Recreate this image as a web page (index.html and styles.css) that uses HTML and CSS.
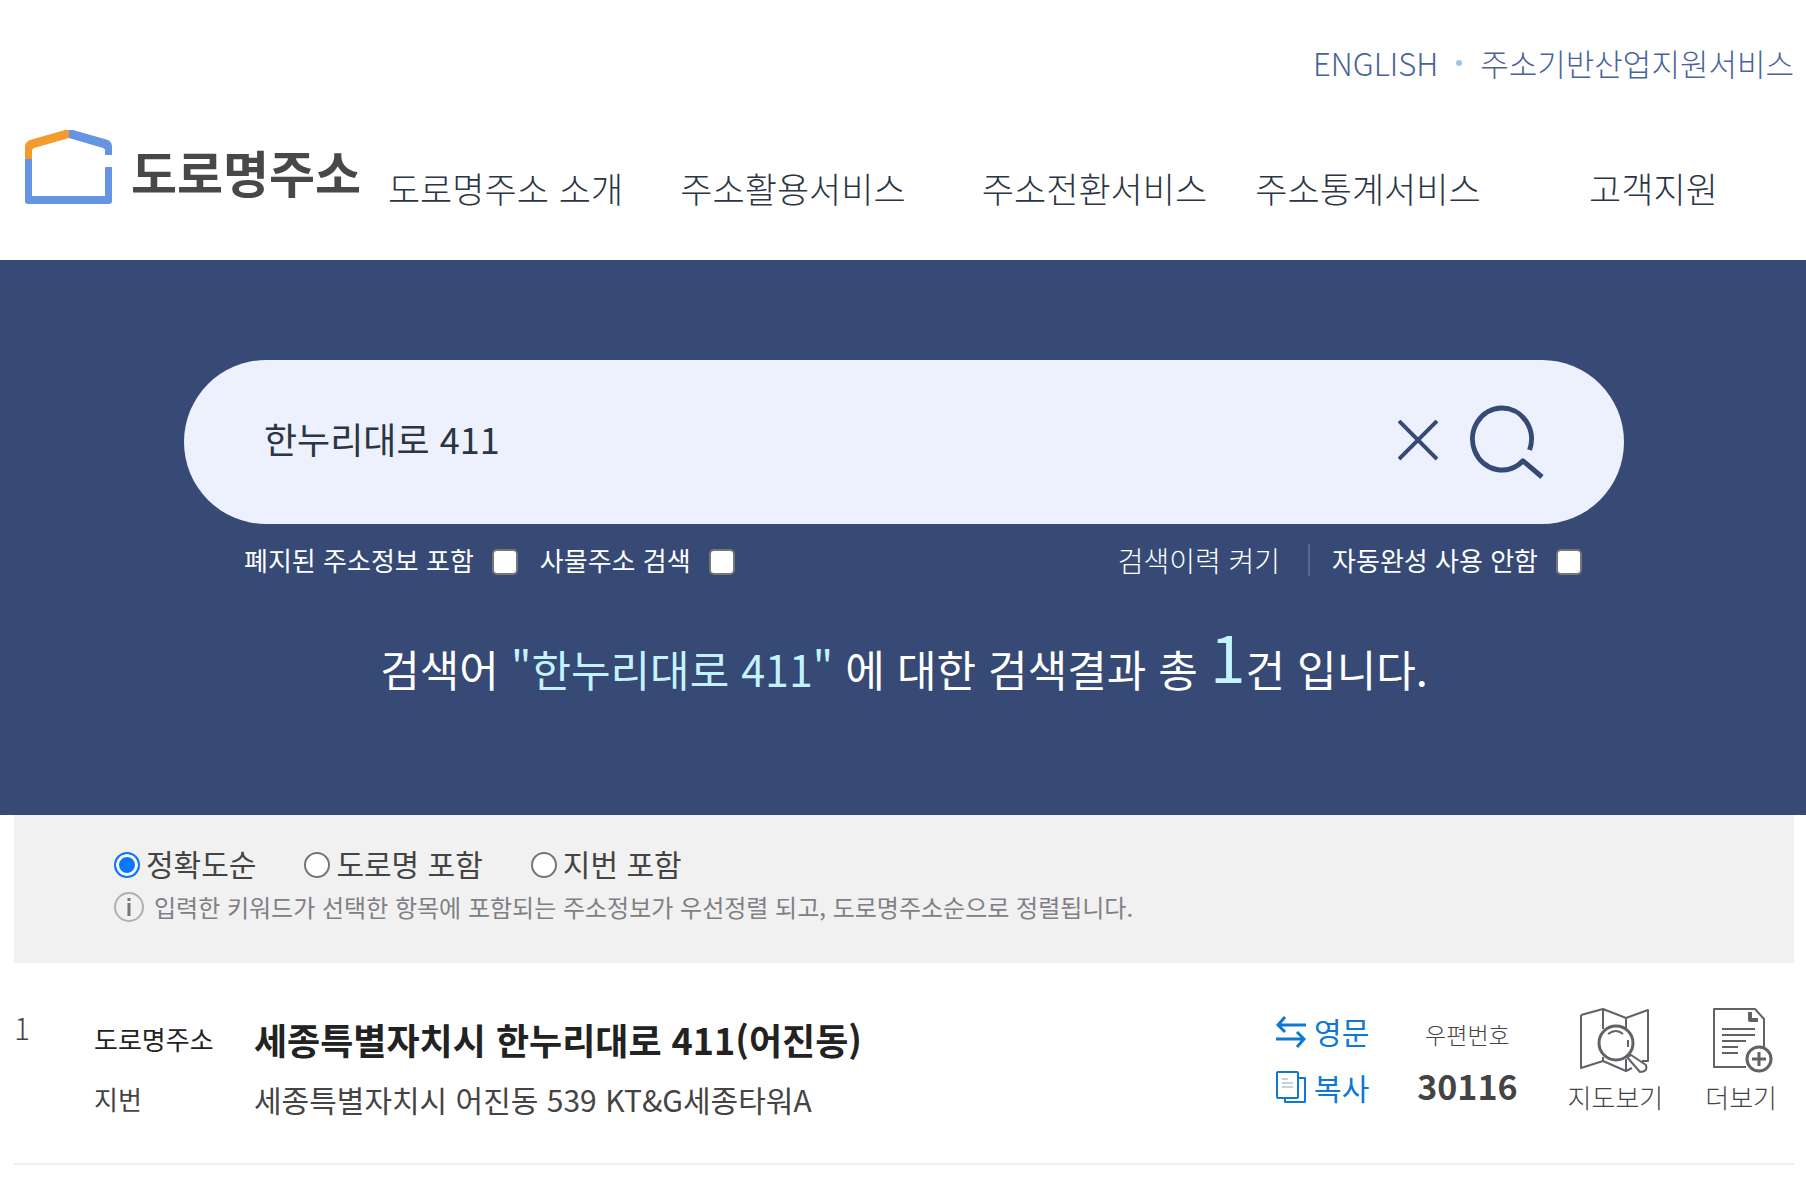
FILE: index.html
```html
<!DOCTYPE html>
<html lang="ko">
<head>
    <meta charset="utf-8">
    <title>도로명주소</title>
    <link rel="stylesheet" href="styles.css">
</head>
<body>

    <header class="header">
        <div class="util">
            <a href="#">ENGLISH</a>
            <span class="dot"></span>
            <a href="#">주소기반산업지원서비스</a>
        </div>
        <div class="header-main">
            <a href="#" class="logo">
                <svg width="88" height="74" viewBox="0 0 88 74">
                    <path d="M0 29V17Q0 12 5 10L40 0H44V8L9 18Q7 19 7 21V29Z" fill="#f39c2d"/>
                    <path d="M44 0H48L83 10Q87 12 87 17V25H80V20Q80 19 78 18L44 8Z" fill="#6594e2"/>
                    <path d="M0 29H7V66H80V38Q80 37 81 37H87V71Q87 74 84 74H3Q0 74 0 71Z" fill="#6594e2"/>
                </svg>
                <span>도로명주소</span>
            </a>
            <nav class="nav">
                <a href="#">도로명주소 소개</a>
                <a href="#">주소활용서비스</a>
                <a href="#">주소전환서비스</a>
                <a href="#">주소통계서비스</a>
                <a href="#">고객지원</a>
            </nav>
        </div>
    </header>

    <section class="hero">
        <form class="search">
            <input type="text" class="search-input" value="한누리대로 411" aria-label="주소 검색">
            <button type="button" class="icon-btn" aria-label="지우기">
                <svg width="40" height="44" viewBox="0 0 40 44" fill="none" stroke="#364a75" stroke-width="4">
                    <path d="M1 1L39 39M39 1L1 39"/>
                </svg>
            </button>
            <button type="button" class="icon-btn" aria-label="검색">
                <svg width="74" height="74" viewBox="0 0 74 74" fill="none" stroke="#364a75" stroke-width="5">
                    <path d="M59.6 45A29.5 31 0 1 0 53 55.8L72 72" stroke-linejoin="round"/>
                </svg>
            </button>
        </form>
        <div class="options">
            <label class="check">폐지된 주소정보 포함 <input type="checkbox"></label>
            <label class="check">사물주소 검색 <input type="checkbox"></label>
            <button type="button" class="history-btn">검색이력 켜기</button>
            <label class="check">자동완성 사용 안함 <input type="checkbox"></label>
        </div>
        <p class="summary">검색어 <em>"한누리대로 411"</em> 에 대한 검색결과 총 <em class="count">1</em>건 입니다.</p>
    </section>

    <main class="content">
        <div class="sort">
            <div class="radios">
                <label><input type="radio" name="sort" checked>정확도순</label>
                <label><input type="radio" name="sort">도로명 포함</label>
                <label><input type="radio" name="sort">지번 포함</label>
            </div>
            <p class="info">
                <svg width="30" height="30" viewBox="0 0 30 30" fill="none">
                    <circle cx="15" cy="15" r="14" stroke="#b0b0b4" stroke-width="2"/>
                    <path d="M15 11V24M15 6V9" stroke="#77777a" stroke-width="3"/>
                </svg>
                입력한 키워드가 선택한 항목에 포함되는 주소정보가 우선정렬 되고, 도로명주소순으로 정렬됩니다.
            </p>
        </div>

        <div class="result">
            <span class="num">1</span>
            <dl class="address">
                <dt class="road">도로명주소</dt>
                <dd class="road-addr">세종특별자치시 한누리대로 411(어진동)</dd>
                <dt>지번</dt>
                <dd>세종특별자치시 어진동 539 KT&amp;G세종타워A</dd>
            </dl>
            <div class="links">
                <button type="button">
                    <svg width="30" height="34" viewBox="0 0 30 34" fill="none" stroke="#0f78d0" stroke-width="3">
                        <path d="M30 11H2M9 3L2 11L9 18"/>
                        <path d="M0 25H28M21 18L28 25L21 33"/>
                    </svg>
                    영문
                </button>
                <button type="button">
                    <svg width="30" height="32" viewBox="0 0 30 32" fill="none" stroke="#0f78d0" stroke-width="2" stroke-linejoin="round">
                        <path d="M22 7H29V31H9V27"/>
                        <rect x="1" y="1" width="21" height="26" rx="1"/>
                        <path d="M6 8H12M6 12H17M6 16H17" stroke="#8aa0c0" stroke-width="1"/>
                    </svg>
                    복사
                </button>
            </div>
            <div class="zip">
                <span>우편번호</span>
                <strong>30116</strong>
            </div>
            <button type="button" class="tool map">
                <svg width="70" height="66" viewBox="0 0 70 66" fill="none" stroke="#606266" stroke-width="2" stroke-linejoin="round">
                    <path d="M1 8L23 2L46 11L68 3V54H62M23 2V22M23 50V54L1 61V8M23 54L46 64L52 61M46 11V21M46 52V64"/>
                    <circle cx="36" cy="36" r="17" stroke-width="3"/>
                    <path d="M28 27Q36 21 43 27M48 33V40"/>
                    <path d="M47 50L51 48L66 58Q68 65 60 65Z"/>
                </svg>
                지도보기
            </button>
            <button type="button" class="tool">
                <svg width="68" height="66" viewBox="-5 0 68 66" fill="none" stroke="#606266" stroke-width="2" stroke-linejoin="round">
                    <path d="M34 60H2V2H43L52 12V40"/>
                    <path d="M38 5V13H46" stroke-width="4"/>
                    <path d="M10 22H43M10 28H43M10 34H34M10 40H26M10 46H26"/>
                    <circle cx="47" cy="52" r="12" stroke-width="3"/>
                    <path d="M40 52H54M47 45V59" stroke-width="3"/>
                </svg>
                더보기
            </button>
        </div>
    </main>

</body>
</html>
```
FILE: styles.css
```css
* {
    box-sizing: border-box;
}

body {
    margin: 0;
    font-family: "Noto Sans CJK KR", "Noto Sans", sans-serif;
    font-weight: 400;
    color: #444;
    background-color: #fff;
}

a {
    color: inherit;
    text-decoration: none;
}

button {
    padding: 0;
    border: none;
    background: none;
    font: inherit;
    color: inherit;
    cursor: pointer;
}

svg {
    display: block;
    flex-shrink: 0;
}

/* Header */
.header {
    font-weight: 300;
}

.util {
    display: flex;
    justify-content: flex-end;
    align-items: center;
    gap: 18px;
    padding: 43px 12px 0 0;
    font-size: 31px;
    line-height: 40px;
    color: #48639b;
}

.dot {
    width: 6px;
    height: 6px;
    border-radius: 50%;
    background-color: #9cc3e8;
}

.header-main {
    display: flex;
    align-items: flex-start;
    padding: 47px 0 50px 25px;
}

.logo {
    display: flex;
    align-items: center;
    gap: 18px;
    height: 74px;
    width: 354px;
    flex-shrink: 0;
    font-size: 50px;
    line-height: 74px;
    font-weight: 700;
    color: #484848;
    white-space: nowrap;
}

.logo span {
    padding-top: 8px;
}

.nav {
    flex: 1;
    display: grid;
    grid-template-columns: 253fr 322fr 281fr 266fr 305fr;
    margin-top: 36px;
    font-size: 35px;
    line-height: 44px;
    color: #2b3544;
    text-align: center;
    white-space: nowrap;
}

/* Search area */
.hero {
    padding: 100px 182px 107px 184px;
    background-color: #364a75;
    color: #fff;
}

.search {
    display: flex;
    align-items: center;
    gap: 32px;
    padding: 45px 80px;
    border-radius: 82px;
    background-color: #edf1fd;
}

.search-input {
    flex: 1;
    min-width: 0;
    padding: 0 0 8px;
    border: none;
    outline: none;
    background: none;
    font: inherit;
    font-size: 36px;
    color: #2b3544;
}

.options {
    display: flex;
    align-items: center;
    gap: 22px;
    padding: 16px 42px 0 60px;
    font-size: 26px;
    line-height: 40px;
}

.check {
    display: flex;
    align-items: center;
    gap: 18px;
}

input[type="checkbox"],
input[type="radio"] {
    appearance: none;
    width: 26px;
    height: 26px;
    margin: 4px 0 0;
    border: 2px solid #767676;
    border-radius: 5px;
    background-color: #fff;
}

input[type="radio"] {
    border-radius: 50%;
}

input:checked {
    border-color: #0a75ff;
    background-color: #0a75ff;
    box-shadow: inset 0 0 0 3px #fff;
}

.history-btn {
    margin-left: auto;
    padding-right: 28px;
    border-right: 2px solid #56688f;
    font-size: 28px;
    font-weight: 300;
    line-height: 32px;
}

.summary {
    margin: 43px 0 0;
    font-size: 43px;
    line-height: 80px;
    text-align: center;
}

.summary em {
    font-style: normal;
    color: #c3f3fd;
}

.summary .count {
    font-size: 64px;
    line-height: 64px;
    vertical-align: 4px;
}

/* Results */
.content {
    margin: 0 12px 0 14px;
}

.sort {
    padding: 26px 100px 34px;
    background-color: #f1f1f1;
}

.radios {
    display: flex;
    gap: 48px;
    font-size: 30px;
    line-height: 44px;
}

.radios label {
    display: flex;
    align-items: center;
    gap: 6px;
}

.info {
    display: flex;
    align-items: center;
    gap: 10px;
    margin: 0;
    font-size: 24px;
    line-height: 44px;
    color: #808083;
}

.result {
    display: flex;
    align-items: flex-start;
    padding: 44px 17px 0 0;
    height: 202px;
    border-bottom: 2px solid #eee;
}

.num {
    width: 80px;
    font-size: 30px;
    font-weight: 300;
    line-height: 40px;
}

.address {
    flex: 1;
    display: grid;
    grid-template-columns: 160px 1fr;
    align-items: center;
    row-gap: 12px;
    margin: 8px 0 0;
    font-size: 30px;
    line-height: 48px;
}

.address dt {
    font-size: 26px;
}

.address dd {
    margin: 0;
}

.address .road {
    color: #222;
}

.address .road-addr {
    font-size: 36px;
    font-weight: 700;
    color: #222;
}

.links {
    display: grid;
    row-gap: 8px;
    font-size: 30px;
    line-height: 48px;
    color: #0f78d0;
}

.links button {
    display: flex;
    align-items: center;
    gap: 8px;
}

.zip {
    display: grid;
    justify-items: center;
    row-gap: 4px;
    margin: 3px 50px 0 48px;
    font-size: 23px;
    font-weight: 300;
    line-height: 48px;
}

.zip strong {
    font-size: 34px;
    font-weight: 700;
}

.tool {
    display: flex;
    flex-direction: column;
    align-items: center;
    gap: 4px;
    font-size: 26px;
    font-weight: 300;
    line-height: 40px;
}

.map {
    margin-right: 42px;
}
```
